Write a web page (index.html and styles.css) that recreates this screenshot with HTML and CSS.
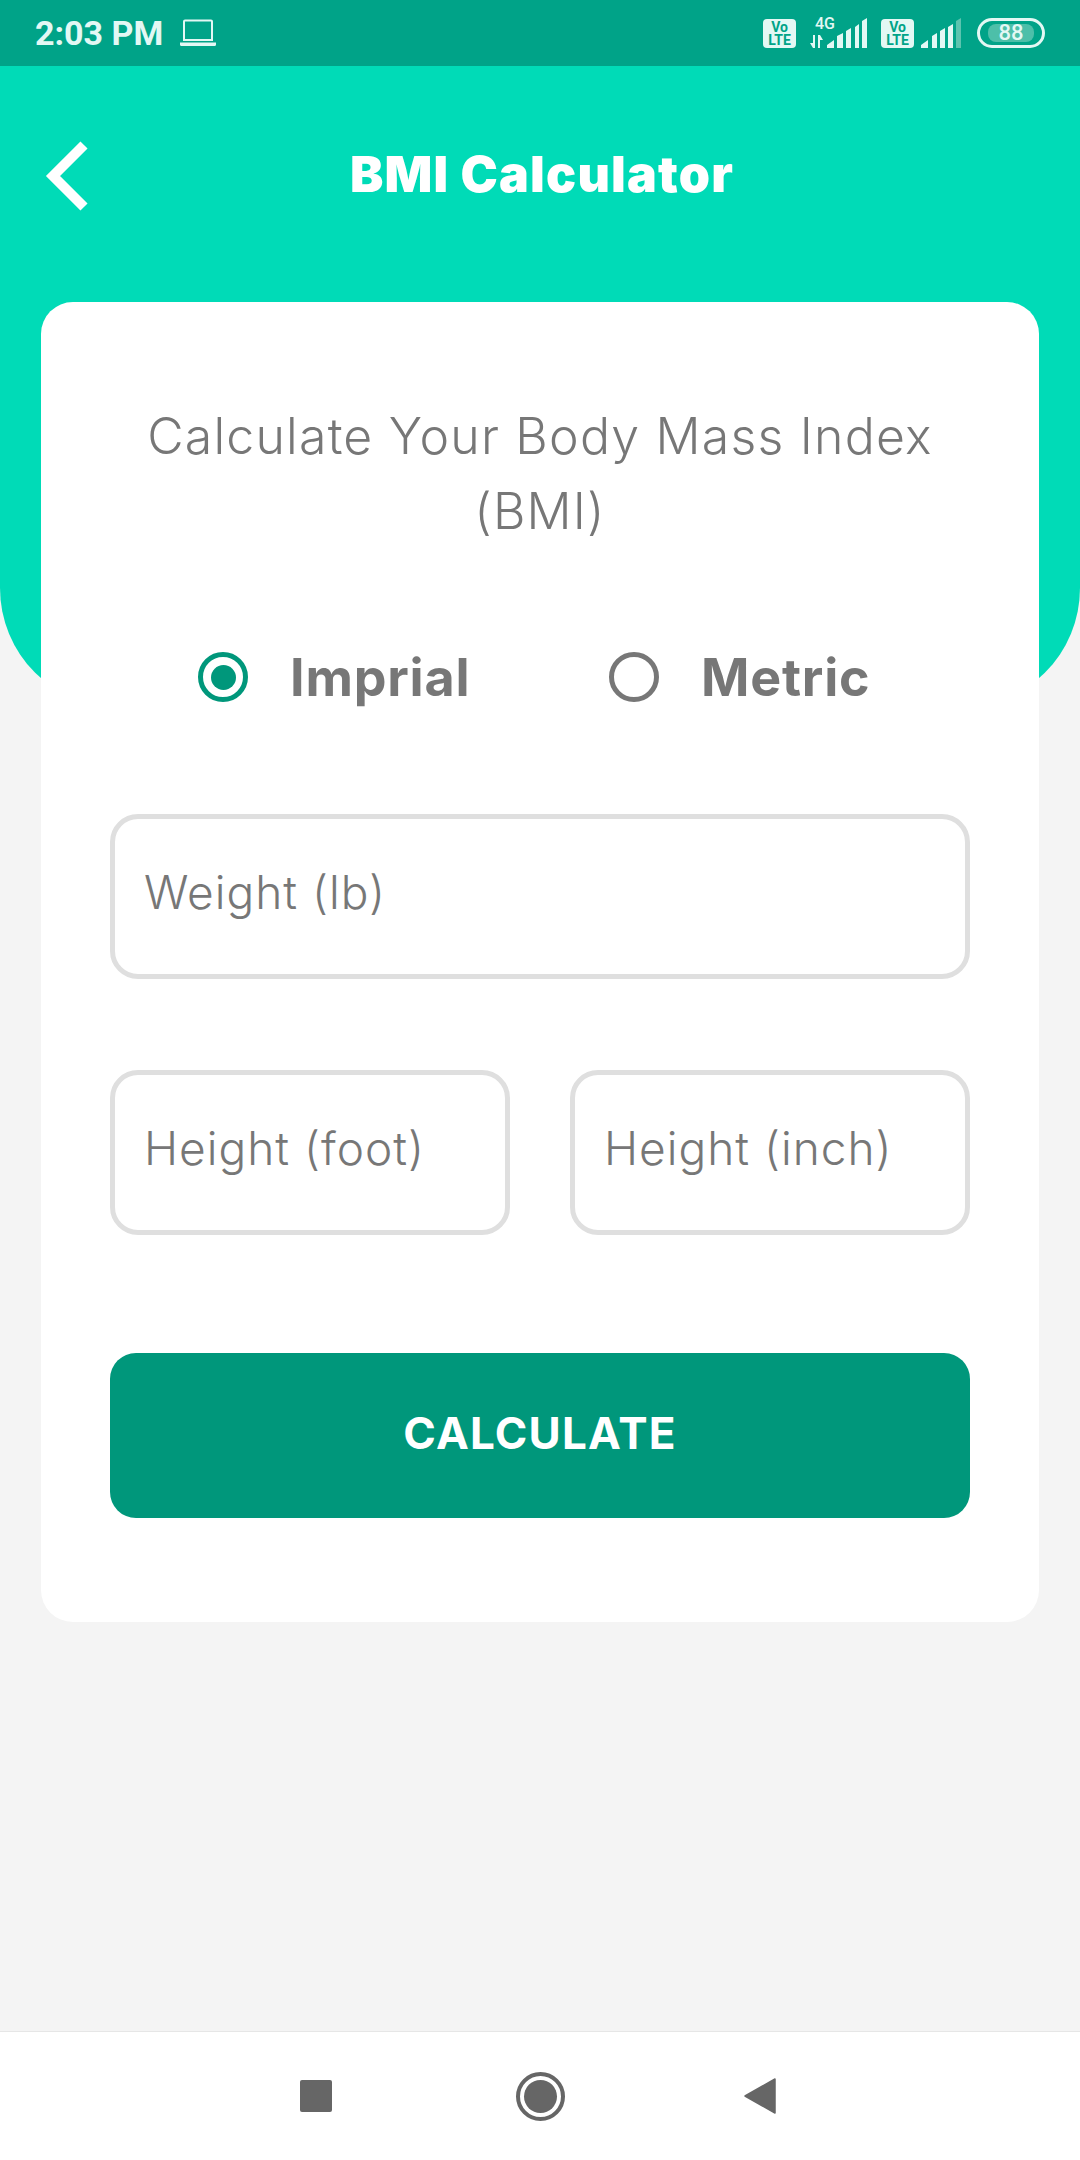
FILE: index.html
```html
<!DOCTYPE html>
<html lang="en">
<head>
  <meta charset="UTF-8">
  <meta name="viewport" content="width=device-width, initial-scale=1.0">
  <title>BMI Calculator</title>
  <link rel="stylesheet" href="styles.css">
</head>
<body>
  <div class="phone">
    <!-- status bar -->
    <div class="status-bar">
      <div class="status-left">
        <span class="time">2:03 PM</span>
        <svg class="laptop" width="36" height="28" viewBox="0 0 36 28">
          <path d="M5 1.500h26a1 1 0 0 1 1 1V21H4V2.500a1 1 0 0 1 1-1z" fill="none" stroke="#e3f8f4" stroke-width="2"/>
          <path d="M0 23.500h36v2a1.500 1.500 0 0 1-1.500 1.500h-33A1.500 1.500 0 0 1 0 25.500z" fill="#e3f8f4"/>
        </svg>
      </div>
      <div class="status-right">
        <span class="volte">Vo<br>LTE</span>
        <div class="net">
          <span class="net-label">4G</span>
          <svg width="13" height="13" viewBox="0 0 13 13">
            <path d="M3 0h2v13H3zM0 8l3 5V8zM8 0h2v13H8zM13 5L10 0v5z" fill="#e3f8f4"/>
          </svg>
        </div>
        <svg class="bars-a" width="40" height="30" viewBox="0 0 40 30">
          <path d="M0 30v-3l7-5v8zM10 30V18l6-3v15zM19 30V13l5-3v20zM28 30V9l4-3v24zM35 30V3l5-3v30z" fill="#e3f8f4"/>
        </svg>
        <span class="volte volte-two">Vo<br>LTE</span>
        <svg class="bars-b" width="40" height="30" viewBox="0 0 40 30">
          <path d="M0 30v-3l7-5v8zM11 30V18l5-3v15zM19 30V13l5-3v20zM27 30V9l5-3v24z" fill="#e3f8f4"/>
          <path d="M35 30V3l5-3v30z" fill="#5cc4af"/>
        </svg>
        <div class="battery"><span class="battery-level">88</span></div>
      </div>
    </div>

    <!-- teal header -->
    <header class="top">
      <svg class="back" width="44" height="70" viewBox="0 0 44 70">
        <path d="M40 4L9 35l31 31" fill="none" stroke="#fff" stroke-width="10"/>
      </svg>
      <h1>BMI Calculator</h1>
    </header>

    <!-- form card -->
    <main class="card">
      <h2>Calculate Your Body Mass Index (BMI)</h2>

      <div class="units">
        <div class="unit">
          <span class="radio radio-on"></span>
          <span class="unit-name">Imprial</span>
        </div>
        <div class="unit">
          <span class="radio"></span>
          <span class="unit-name">Metric</span>
        </div>
      </div>

      <div class="field">Weight (lb)</div>
      <div class="field-row">
        <div class="field">Height (foot)</div>
        <div class="field">Height (inch)</div>
      </div>

      <button class="calc-btn">CALCULATE</button>
    </main>

    <!-- android nav -->
    <nav class="nav-bar">
      <span class="nav-square"></span>
      <span class="nav-home"><span class="nav-home-dot"></span></span>
      <svg width="32" height="38" viewBox="0 0 32 38">
        <path d="M31 2v34L1 19z" fill="#666" stroke="#666" stroke-width="1.500" stroke-linejoin="round"/>
      </svg>
    </nav>
  </div>
</body>
</html>
```

FILE: styles.css
```css
* {
  box-sizing: border-box;
}

body {
  margin: 0;
  padding: 0;
  background-color: #f4f4f4;
  font-family: 'Inter', 'Liberation Sans', sans-serif;
}

.phone {
  width: 1080px;
  height: 2160px;
  display: flex;
  flex-direction: column;
  overflow: hidden;
}

.status-bar {
  height: 66px;
  background-color: #00a388;
  display: flex;
  justify-content: space-between;
  align-items: center;
  padding: 0 35px;
  flex-shrink: 0;
}

.status-left {
  display: flex;
  align-items: center;
  gap: 17px;
}

.time {
  font-family: 'Roboto', sans-serif;
  font-weight: 700;
  font-size: 34px;
  color: #e3f8f4;
}

.status-right {
  display: flex;
  align-items: center;
}

.volte {
  width: 33px;
  height: 29px;
  background-color: #e3f8f4;
  border-radius: 4px;
  color: #00a388;
  font-family: 'Roboto', sans-serif;
  font-size: 14px;
  font-weight: 700;
  line-height: 13px;
  text-align: center;
  padding-top: 2px;
}

.net {
  width: 17px;
  height: 30px;
  margin-left: 14px;
  position: relative;
  display: flex;
  align-items: flex-end;
}

.net-label {
  position: absolute;
  top: -4px;
  left: 5px;
  font-family: 'Roboto', sans-serif;
  font-size: 16px;
  font-weight: 500;
  color: #e3f8f4;
}

.volte-two {
  margin-left: 14px;
}

.bars-b {
  margin-left: 7px;
}

.battery {
  width: 68px;
  height: 30px;
  margin-left: 16px;
  border: 3px solid #e3f8f4;
  border-radius: 15px;
  padding: 3px 8px;
  display: flex;
}

.battery-level {
  flex: 1;
  background-color: #4dbfa9;
  border-radius: 8px;
  color: #e3f8f4;
  font-family: 'Roboto', sans-serif;
  font-weight: 500;
  font-size: 22px;
  line-height: 18px;
  text-align: center;
}

.top {
  height: 642px;
  flex-shrink: 0;
  background-color: #00dbb7;
  border-radius: 0 0 120px 120px;
  position: relative;
  padding: 78px 0 0 4px;
  text-align: center;
}

.top h1 {
  margin: 0;
  font-size: 50px;
  line-height: 60px;
  font-weight: 900;
  letter-spacing: 1.2px;
  color: #fff;
}

.back {
  position: absolute;
  left: 44px;
  top: 75px;
}

.card {
  width: 998px;
  height: 1320px;
  margin: -406px auto 0;
  background-color: #fff;
  border-radius: 32px;
  padding: 97px 69px 0;
  position: relative;
  flex-shrink: 0;
}

.card h2 {
  margin: 0 0 98px;
  padding: 0 20px;
  font-size: 50px;
  line-height: 75px;
  font-weight: 300;
  letter-spacing: 1.2px;
  color: #777;
  text-align: center;
}

.units {
  display: flex;
  height: 60px;
  margin-bottom: 107px;
  padding-left: 88px;
}

.unit {
  width: 411px;
  flex-shrink: 0;
  display: flex;
  align-items: center;
  gap: 42px;
}

.radio {
  width: 50px;
  height: 50px;
  border-radius: 50%;
  border: 5px solid #777;
  display: flex;
  align-items: center;
  justify-content: center;
}

.radio-on {
  border-color: #00977b;
}

.radio-on::after {
  content: "";
  width: 25px;
  height: 25px;
  border-radius: 50%;
  background-color: #00977b;
}

.unit-name {
  font-size: 52px;
  font-weight: 700;
  letter-spacing: 0.8px;
  color: #777;
}

.field {
  height: 165px;
  border: 5px solid #dfdfdf;
  border-radius: 28px;
  padding: 0 0 10px 29px;
  display: flex;
  align-items: center;
  font-size: 46px;
  font-weight: 300;
  letter-spacing: 1px;
  color: #777;
}

.field-row {
  display: flex;
  gap: 60px;
  margin-top: 91px;
}

.field-row .field {
  flex: 1;
}

.calc-btn {
  display: block;
  width: 100%;
  height: 165px;
  margin-top: 118px;
  padding: 0 0 5px;
  border: none;
  border-radius: 26px;
  background-color: #00977b;
  color: #fff;
  font-family: inherit;
  font-size: 44px;
  font-weight: 700;
  letter-spacing: 1.2px;
}

.nav-bar {
  margin-top: auto;
  height: 129px;
  background-color: #fff;
  border-top: 1px solid #e6e6e6;
  display: flex;
  align-items: center;
  padding: 0 304px 0 300px;
  justify-content: space-between;
}

.nav-square {
  width: 32px;
  height: 32px;
  background-color: #666;
  border-radius: 2px;
}

.nav-home {
  width: 49px;
  height: 49px;
  margin-left: 5px;
  border: 4px solid #666;
  border-radius: 50%;
  display: flex;
  align-items: center;
  justify-content: center;
}

.nav-home-dot {
  width: 33px;
  height: 33px;
  border-radius: 50%;
  background-color: #666;
}
```
